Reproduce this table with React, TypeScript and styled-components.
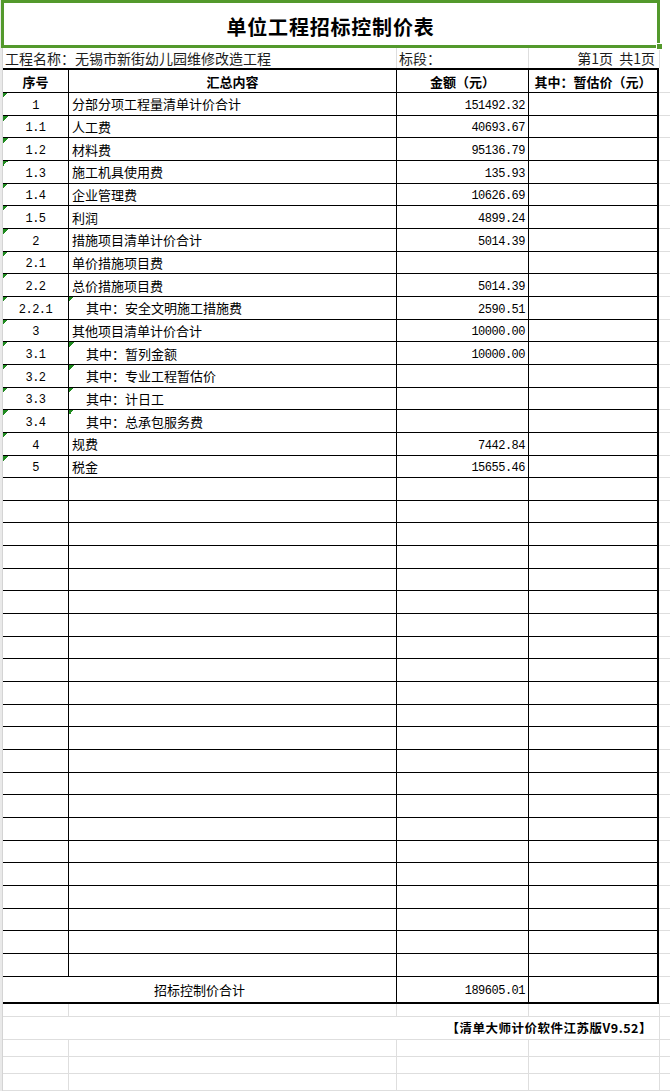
import React from "react";
import styled, { createGlobalStyle, css } from "styled-components";

const GlobalStyle = createGlobalStyle`
  html, body { margin: 0; padding: 0; background: #fff; }
  body {
    font-family: "Noto Sans CJK SC", "Noto Sans", sans-serif;
    color: #000;
  }
`;

const COLS = "65px 328px 132px 131px 11px";
const GREEN = "#53992c";
const GRID = "#dedede";

type Edge = "first" | "mid" | "last";
type Align = "left" | "center" | "right";

const justify = (a?: Align) =>
  a === "center" ? "center" : a === "right" ? "flex-end" : "flex-start";

const Page = styled.div`
  width: 670px;
  height: 1091px;
  overflow: hidden;
  display: flex;
  flex-direction: column;
  background: linear-gradient(to right, #e9e9e9 0 2px, #d4d4d4 2px 3px, #fff 3px);
`;

const TitleBox = styled.div`
  position: relative;
  box-sizing: border-box;
  margin-left: 1px;
  width: 659px;
  height: 48px;
  flex: none;
  border: 3px solid ${GREEN};
  background: #fff;
  display: flex;
  align-items: center;
  justify-content: center;
  padding-top: 4px;
  font-size: 20px;
  font-weight: 700;
  letter-spacing: 0.8px;
`;

const FillHandle = styled.span`
  position: absolute;
  right: -5px;
  bottom: -4px;
  width: 5px;
  height: 5px;
  background: ${GREEN};
  box-shadow: 0 0 0 1px #fff;
`;

const Row = styled.div<{ $h: number }>`
  display: grid;
  grid-template-columns: ${COLS};
  margin-left: 3px;
  height: ${(p) => p.$h}px;
  flex: none;
`;

/* ---------- info line above the table ---------- */
const InfoCell = styled.div<{ $span?: number; $align?: Align; $grid?: boolean }>`
  box-sizing: border-box;
  grid-column: span ${(p) => p.$span ?? 1};
  display: flex;
  align-items: center;
  justify-content: ${(p) => justify(p.$align)};
  padding: ${(p) => (p.$align === "right" ? "0 4px 0 0" : "0 0 0 2px")};
  border-left: ${(p) => (p.$grid ? `1px solid ${GRID}` : "none")};
  font-size: 14px;
  color: #1d1d1d;
  white-space: nowrap;
`;

/* ---------- table cells ---------- */
const Cell = styled.div<{ $edge: Edge; $align?: Align; $flag?: boolean; $span?: number }>`
  box-sizing: border-box;
  grid-column: span ${(p) => p.$span ?? 1};
  display: flex;
  align-items: center;
  justify-content: ${(p) => justify(p.$align)};
  min-width: 0;
  white-space: nowrap;
  font-size: 13px;
  border-bottom: 1px solid #000;
  border-left: ${(p) => (p.$edge === "first" ? "none" : "1px solid #000")};
  border-right: ${(p) => (p.$edge === "last" ? "2px solid #000" : "none")};
  ${(p) =>
    p.$flag &&
    css`
      background: linear-gradient(135deg, #1f8a1f 50%, transparent 50%) no-repeat 0 0 / 5px 5px;
    `}
`;

const HeadCell = styled(Cell)`
  border-top: 2px solid #000;
  font-weight: 700;
  font-size: 13px;
`;

const NameCell = styled(Cell)<{ $indent?: boolean }>`
  padding-left: ${(p) => (p.$indent ? "17px" : "3px")};
`;

const AmountCell = styled(Cell)`
  padding-right: 3px;
`;

const TotalCell = styled(Cell)`
  border-bottom-width: 2px;
`;

const TailCell = styled.div<{ $grid?: boolean }>`
  box-sizing: border-box;
  border-bottom: 1px solid ${GRID};
  border-left: ${(p) => (p.$grid ? `1px solid ${GRID}` : "none")};
`;

const Num = styled.span`
  display: inline-block;
  padding-top: 4px;
  line-height: 1;
  font-family: "Liberation Mono", "DejaVu Sans Mono", monospace;
  font-size: 12px;
  letter-spacing: -0.5px;
`;

/* ---------- empty sheet area below the table ---------- */
const SheetCell = styled.div<{ $span?: number; $grid?: boolean }>`
  box-sizing: border-box;
  grid-column: span ${(p) => p.$span ?? 1};
  border-bottom: 1px solid ${GRID};
  border-left: ${(p) => (p.$grid ? `1px solid ${GRID}` : "none")};
`;

const Credit = styled(SheetCell)`
  display: flex;
  align-items: center;
  justify-content: flex-end;
  padding-right: 7px;
  font-size: 12.5px;
  font-weight: 700;
  letter-spacing: 0.5px;
  white-space: nowrap;
`;

type Item = { seq: string; name: string; amount: string; indent?: boolean };

const items: Item[] = [
  { seq: "1", name: "分部分项工程量清单计价合计", amount: "151492.32" },
  { seq: "1.1", name: "人工费", amount: "40693.67" },
  { seq: "1.2", name: "材料费", amount: "95136.79" },
  { seq: "1.3", name: "施工机具使用费", amount: "135.93" },
  { seq: "1.4", name: "企业管理费", amount: "10626.69" },
  { seq: "1.5", name: "利润", amount: "4899.24" },
  { seq: "2", name: "措施项目清单计价合计", amount: "5014.39" },
  { seq: "2.1", name: "单价措施项目费", amount: "" },
  { seq: "2.2", name: "总价措施项目费", amount: "5014.39" },
  { seq: "2.2.1", name: "其中：安全文明施工措施费", amount: "2590.51", indent: true },
  { seq: "3", name: "其他项目清单计价合计", amount: "10000.00" },
  { seq: "3.1", name: "其中：暂列金额", amount: "10000.00", indent: true },
  { seq: "3.2", name: "其中：专业工程暂估价", amount: "", indent: true },
  { seq: "3.3", name: "其中：计日工", amount: "", indent: true },
  { seq: "3.4", name: "其中：总承包服务费", amount: "", indent: true },
  { seq: "4", name: "规费", amount: "7442.84" },
  { seq: "5", name: "税金", amount: "15655.46" },
];

const EMPTY_ROWS = 22;
const ROW_H = 22.67;

function SheetRow({ h }: { h: number }) {
  return (
    <Row $h={h}>
      <SheetCell />
      <SheetCell $grid />
      <SheetCell $grid />
      <SheetCell $grid />
      <SheetCell $grid />
    </Row>
  );
}

export default function App() {
  return (
    <Page>
      <GlobalStyle />
      <TitleBox>
        单位工程招标控制价表
        <FillHandle />
      </TitleBox>

      <Row $h={20}>
        <InfoCell $span={2}>工程名称：无锡市新街幼儿园维修改造工程</InfoCell>
        <InfoCell $grid>标段：</InfoCell>
        <InfoCell $grid $align="right">第1页&nbsp;&nbsp;共1页</InfoCell>
        <InfoCell $grid />
      </Row>

      <Row $h={25}>
        <HeadCell $edge="first" $align="center">序号</HeadCell>
        <HeadCell $edge="mid" $align="center">汇总内容</HeadCell>
        <HeadCell $edge="mid" $align="center">金额（元）</HeadCell>
        <HeadCell $edge="last" $align="center">其中：暂估价（元）</HeadCell>
        <TailCell />
      </Row>

      {items.map((it) => (
        <Row $h={ROW_H} key={it.seq}>
          <Cell $edge="first" $align="center" $flag>
            <Num>{it.seq}</Num>
          </Cell>
          <NameCell $edge="mid" $flag={it.indent} $indent={it.indent}>
            {it.name}
          </NameCell>
          <AmountCell $edge="mid" $align="right">
            <Num>{it.amount}</Num>
          </AmountCell>
          <Cell $edge="last" />
          <TailCell />
        </Row>
      ))}

      {Array.from({ length: EMPTY_ROWS }, (_, i) => (
        <Row $h={ROW_H} key={`e${i}`}>
          <Cell $edge="first" />
          <Cell $edge="mid" />
          <Cell $edge="mid" />
          <Cell $edge="last" />
          <TailCell />
        </Row>
      ))}

      <Row $h={27}>
        <TotalCell $edge="first" $span={2} $align="center">
          招标控制价合计
        </TotalCell>
        <TotalCell as={AmountCell} $edge="mid" $align="right">
          <Num>189605.01</Num>
        </TotalCell>
        <TotalCell $edge="last" />
        <TailCell />
      </Row>

      <SheetRow h={13} />
      <Row $h={23}>
        <Credit $span={4}>【清单大师计价软件江苏版V9.52】</Credit>
        <SheetCell $grid />
      </Row>
      <SheetRow h={17} />
      <SheetRow h={17} />
      <SheetRow h={17} />
    </Page>
  );
}
